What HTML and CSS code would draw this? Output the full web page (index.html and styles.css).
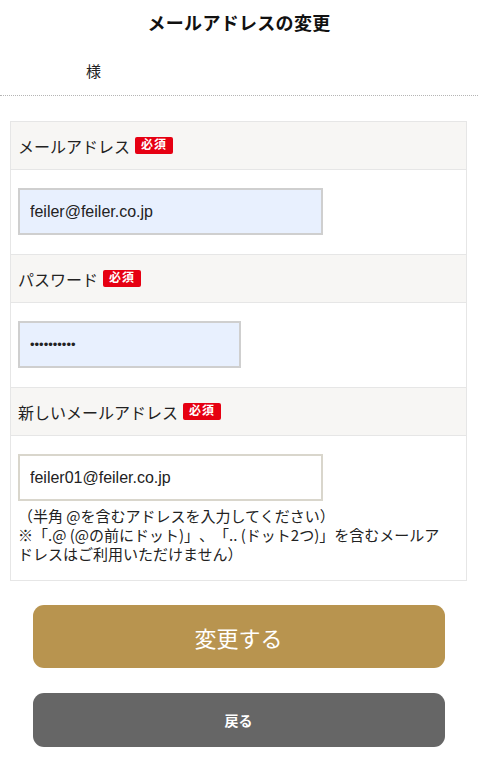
FILE: index.html
```html
<!DOCTYPE html>
<html lang="ja">

<head>
    <meta charset="UTF-8">
    <meta name="viewport" content="width=device-width, initial-scale=1.0">
    <title>メールアドレスの変更</title>
    <link rel="stylesheet" href="styles.css">
</head>

<body>
    <h1 class="page-title">メールアドレスの変更</h1>
    <p class="customer-name">様</p>

    <div class="form-table">
        <div class="form-head">メールアドレス <span class="required">必須</span></div>
        <div class="form-body">
            <input class="field field-fill field-wide" type="text" value="feiler@feiler.co.jp">
        </div>

        <div class="form-head">パスワード <span class="required">必須</span></div>
        <div class="form-body">
            <input class="field field-fill field-short" type="password" value="feilerpass">
        </div>

        <div class="form-head">新しいメールアドレス <span class="required">必須</span></div>
        <div class="form-body form-body-note">
            <input class="field field-wide" type="text" value="feiler01@feiler.co.jp">
            <p class="note">（半角 @を含むアドレスを入力してください）<br>※「.@ (@の前にドット)」、「.. (ドット2つ)」を含むメールアドレスはご利用いただけません）</p>
        </div>
    </div>

    <div class="actions">
        <button class="btn btn-submit" type="button">変更する</button>
        <button class="btn btn-back" type="button">戻る</button>
    </div>
</body>

</html>
```

FILE: styles.css
```css
body {
    margin: 0;
    font-family: "Liberation Sans", "Noto Sans CJK JP", sans-serif;
    color: #222;
    background: #fff;
    text-spacing-trim: space-all;
}

.page-title {
    margin: 0;
    padding-top: 9px;
    height: 26px;
    font-size: 18px;
    font-weight: bold;
    text-align: center;
    letter-spacing: 0.3px;
    color: #111;
}

.customer-name {
    margin: 0;
    padding: 27px 0 9px 86px;
    height: 24px;
    font-size: 15px;
    line-height: 20px;
    border-bottom: 1px dotted #b5b5b5;
}

.form-table {
    margin: 25px 11px 0 10px;
    border: 1px solid #e6e6e6;
}

.form-head {
    background: #f7f6f4;
    height: 48px;
    padding-left: 7px;
    display: flex;
    align-items: center;
    gap: 5px;
    font-size: 16px;
    border-bottom: 1px solid #e6e6e6;
    box-sizing: border-box;
}

.required {
    display: inline-block;
    background: #e60012;
    color: #fff;
    font-size: 12px;
    font-weight: bold;
    line-height: 17px;
    padding: 0 6px;
    border-radius: 2px;
    letter-spacing: 1px;
}

.form-body {
    height: 85px;
    padding: 18px 0 0 7px;
    box-sizing: border-box;
    border-bottom: 1px solid #e6e6e6;
}

.form-body-note {
    height: auto;
    padding-bottom: 17px;
    border-bottom: none;
}

.field {
    display: block;
    box-sizing: border-box;
    height: 47px;
    padding: 0 10px;
    font-family: "Liberation Sans", sans-serif;
    font-size: 16px;
    color: #222;
    border: 2px solid #d9d6cc;
    background: #fff;
    outline: none;
}

.field-fill {
    background: #e8f0fe;
    border-color: #cfcfcf;
}

.field-wide {
    width: 305px;
}

.field-short {
    width: 223px;
}

.field[type="password"] {
    font-size: 13px;
}

.note {
    margin: 5px 0 0;
    font-family: "Noto Sans CJK JP", sans-serif;
    font-size: 15px;
    line-height: 19px;
    color: #222;
    padding-right: 14px;
}

.actions {
    display: flex;
    flex-direction: column;
    align-items: center;
    gap: 25px;
    margin-top: 24px;
    padding-right: 1px;
}

.btn {
    width: 412px;
    border: none;
    border-radius: 11px;
    color: #fff;
    font-family: "Noto Sans CJK JP", sans-serif;
    cursor: pointer;
}

.btn-submit {
    height: 63px;
    background: #b8944f;
    font-size: 22px;
}

.btn-back {
    height: 54px;
    background: #666;
    font-size: 14px;
    font-weight: bold;
}
```
